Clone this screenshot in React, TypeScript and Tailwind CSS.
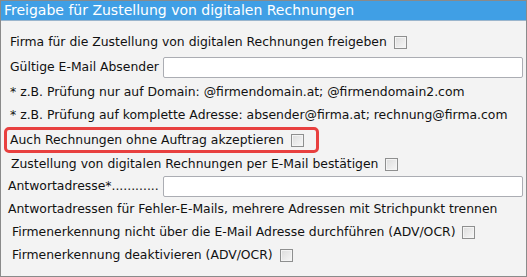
import React from "react";

function Check() {
  return (
    <span className="ml-[7px] inline-block h-[13px] w-[13px] shrink-0 border border-[#8e8f8f] bg-gradient-to-br from-[#dcdcdc] to-[#f7f7f7] shadow-[inset_0_0_0_1px_#f4f4f4]" />
  );
}

function TextInput() {
  return (
    <div className="h-[21px] flex-1 rounded-[2px] border border-[#abadb3] bg-white" />
  );
}

export default function App() {
  return (
    <div
      className="h-[277px] w-[527px] overflow-hidden border border-[#8a8a8a] bg-[#f3f3f3] text-[#111] text-[12.4px]"
      style={{ fontFamily: '"DejaVu Sans", Verdana, sans-serif' }}
    >
      {/* Title bar */}
      <div className="flex h-[20px] items-center border-b border-[#9bb5cc] bg-[#409fe5] pl-[3px] text-[14px] text-white">
        Freigabe für Zustellung von digitalen Rechnungen
      </div>

      <div className="pt-[9px]">
        <div className="flex h-[25px] items-center pl-[9px]">
          Firma für die Zustellung von digitalen Rechnungen freigeben
          <Check />
        </div>
        <div className="flex h-[25px] items-center pl-[9px] pr-[3px]">
          <span className="w-[153px] shrink-0">Gültige E-Mail Absender</span>
          <TextInput />
        </div>
        <div className="flex h-[24px] items-center pl-[9px]">
          * z.B. Prüfung nur auf Domain: @firmendomain.at; @firmendomain2.com
        </div>
        <div className="flex h-[23px] items-center pl-[9px]">
          * z.B. Prüfung auf komplette Adresse: absender@firma.at; rechnung@firma.com
        </div>
        <div className="pl-[3px]">
          <div className="flex h-[26px] w-[315px] items-center rounded-[5px] border-[3px] border-[#e8403f] pl-[3px]">
            Auch Rechnungen ohne Auftrag akzeptieren
            <Check />
          </div>
        </div>
        <div className="flex h-[22px] items-center pl-[10px]">
          Zustellung von digitalen Rechnungen per E-Mail bestätigen
          <Check />
        </div>
        <div className="flex h-[23px] items-center pl-[7px] pr-[3px]">
          <span className="w-[155px] shrink-0 whitespace-nowrap">Antwortadresse*............</span>
          <TextInput />
        </div>
        <div className="flex h-[23px] items-center pl-[7px]">
          Antwortadressen für Fehler-E-Mails, mehrere Adressen mit Strichpunkt trennen
        </div>
        <div className="flex h-[23px] items-center pl-[11px]">
          Firmenerkennung nicht über die E-Mail Adresse durchführen (ADV/OCR)
          <Check />
        </div>
        <div className="flex h-[23px] items-center pl-[11px]">
          Firmenerkennung deaktivieren (ADV/OCR)
          <Check />
        </div>
      </div>
    </div>
  );
}
